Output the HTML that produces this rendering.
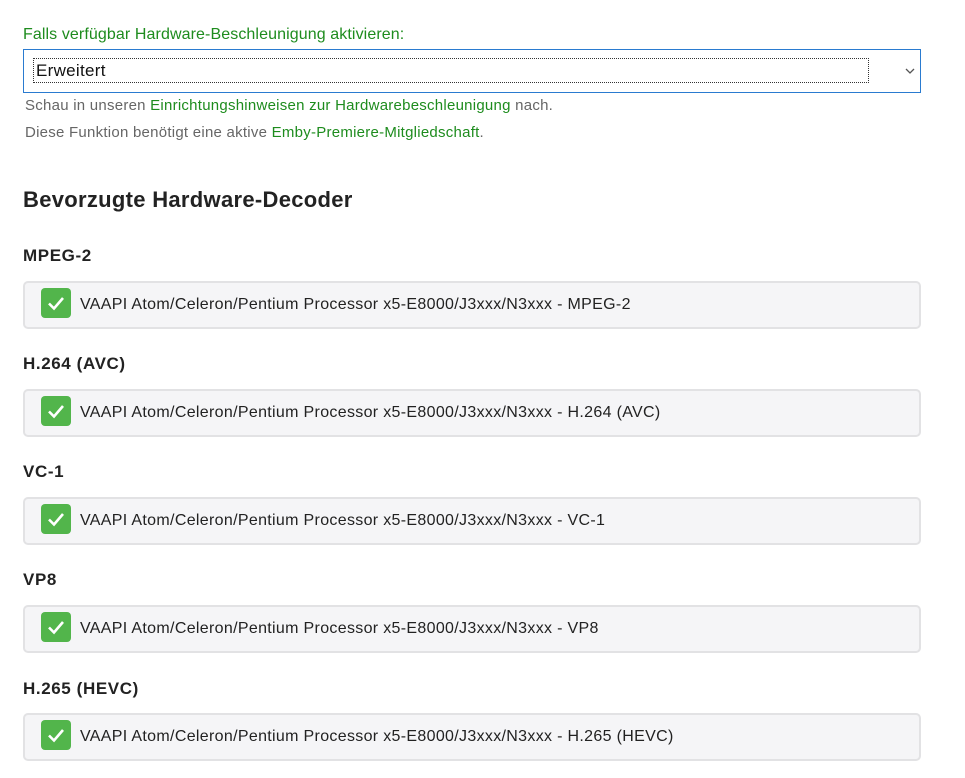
<!DOCTYPE html>
<html><head><style>
body{margin:0;background:#fff;font-family:"Liberation Sans",Arial,sans-serif;width:965px;height:778px;overflow:hidden;position:relative}
.a{position:absolute}
.g{color:#1e8c1e}
.sel{left:23px;top:49px;width:896px;height:42px;border:1px solid #2a7bd0}
.focus{left:9px;top:8px;width:832px;height:23px;border:1px dotted #333;font-size:17px;line-height:23px;padding-left:2px;color:#111;letter-spacing:0.3px}
.note{left:25px;font-size:15px;color:#666;letter-spacing:0.25px}
h2{position:absolute;left:23px;top:187px;margin:0;font-size:22px;font-weight:bold;color:#222;letter-spacing:0.3px}
.h{position:absolute;left:23px;font-size:17px;font-weight:bold;color:#222;letter-spacing:0.6px}
.box{position:absolute;left:23px;width:894px;height:44px;border:2px solid #e2e2e4;border-radius:5px;background:#f5f5f7}
.cb{position:absolute;left:16px;top:5px;width:30px;height:30px;background:#52b54b;border-radius:4px}
.lbl{position:absolute;left:55px;top:13px;font-size:16px;color:#222;letter-spacing:0.32px}
</style></head><body>
<div class="a g" style="left:23px;top:26px;font-size:16px;letter-spacing:0.1px">Falls verfügbar Hardware-Beschleunigung aktivieren:</div>
<div class="a sel"><div class="a focus">Erweitert</div>
<svg class="a" style="left:880px;top:16px" width="12" height="10"><path d="M2 3 L6 7 L10 3" fill="none" stroke="#555" stroke-width="1.3"/></svg></div>
<div class="a note" style="top:97px">Schau in unseren <span class="g">Einrichtungshinweisen zur Hardwarebeschleunigung</span> nach.</div>
<div class="a note" style="top:124px">Diese Funktion benötigt eine aktive <span class="g">Emby-Premiere-Mitgliedschaft</span>.</div>
<h2>Bevorzugte Hardware-Decoder</h2>

<div class="h" style="top:246px">MPEG-2</div>
<div class="box" style="top:281px"><div class="cb"><svg width="30" height="30"><path d="M8 15.5 L13 20.5 L22 10" fill="none" stroke="#fff" stroke-width="2.6"/></svg></div><div class="lbl">VAAPI Atom/Celeron/Pentium Processor x5-E8000/J3xxx/N3xxx - MPEG-2</div></div>

<div class="h" style="top:354px">H.264 (AVC)</div>
<div class="box" style="top:389px"><div class="cb"><svg width="30" height="30"><path d="M8 15.5 L13 20.5 L22 10" fill="none" stroke="#fff" stroke-width="2.6"/></svg></div><div class="lbl">VAAPI Atom/Celeron/Pentium Processor x5-E8000/J3xxx/N3xxx - H.264 (AVC)</div></div>

<div class="h" style="top:462px">VC-1</div>
<div class="box" style="top:497px"><div class="cb"><svg width="30" height="30"><path d="M8 15.5 L13 20.5 L22 10" fill="none" stroke="#fff" stroke-width="2.6"/></svg></div><div class="lbl">VAAPI Atom/Celeron/Pentium Processor x5-E8000/J3xxx/N3xxx - VC-1</div></div>

<div class="h" style="top:570px">VP8</div>
<div class="box" style="top:605px"><div class="cb"><svg width="30" height="30"><path d="M8 15.5 L13 20.5 L22 10" fill="none" stroke="#fff" stroke-width="2.6"/></svg></div><div class="lbl">VAAPI Atom/Celeron/Pentium Processor x5-E8000/J3xxx/N3xxx - VP8</div></div>

<div class="h" style="top:679px">H.265 (HEVC)</div>
<div class="box" style="top:713px"><div class="cb"><svg width="30" height="30"><path d="M8 15.5 L13 20.5 L22 10" fill="none" stroke="#fff" stroke-width="2.6"/></svg></div><div class="lbl">VAAPI Atom/Celeron/Pentium Processor x5-E8000/J3xxx/N3xxx - H.265 (HEVC)</div></div>
</body></html>
